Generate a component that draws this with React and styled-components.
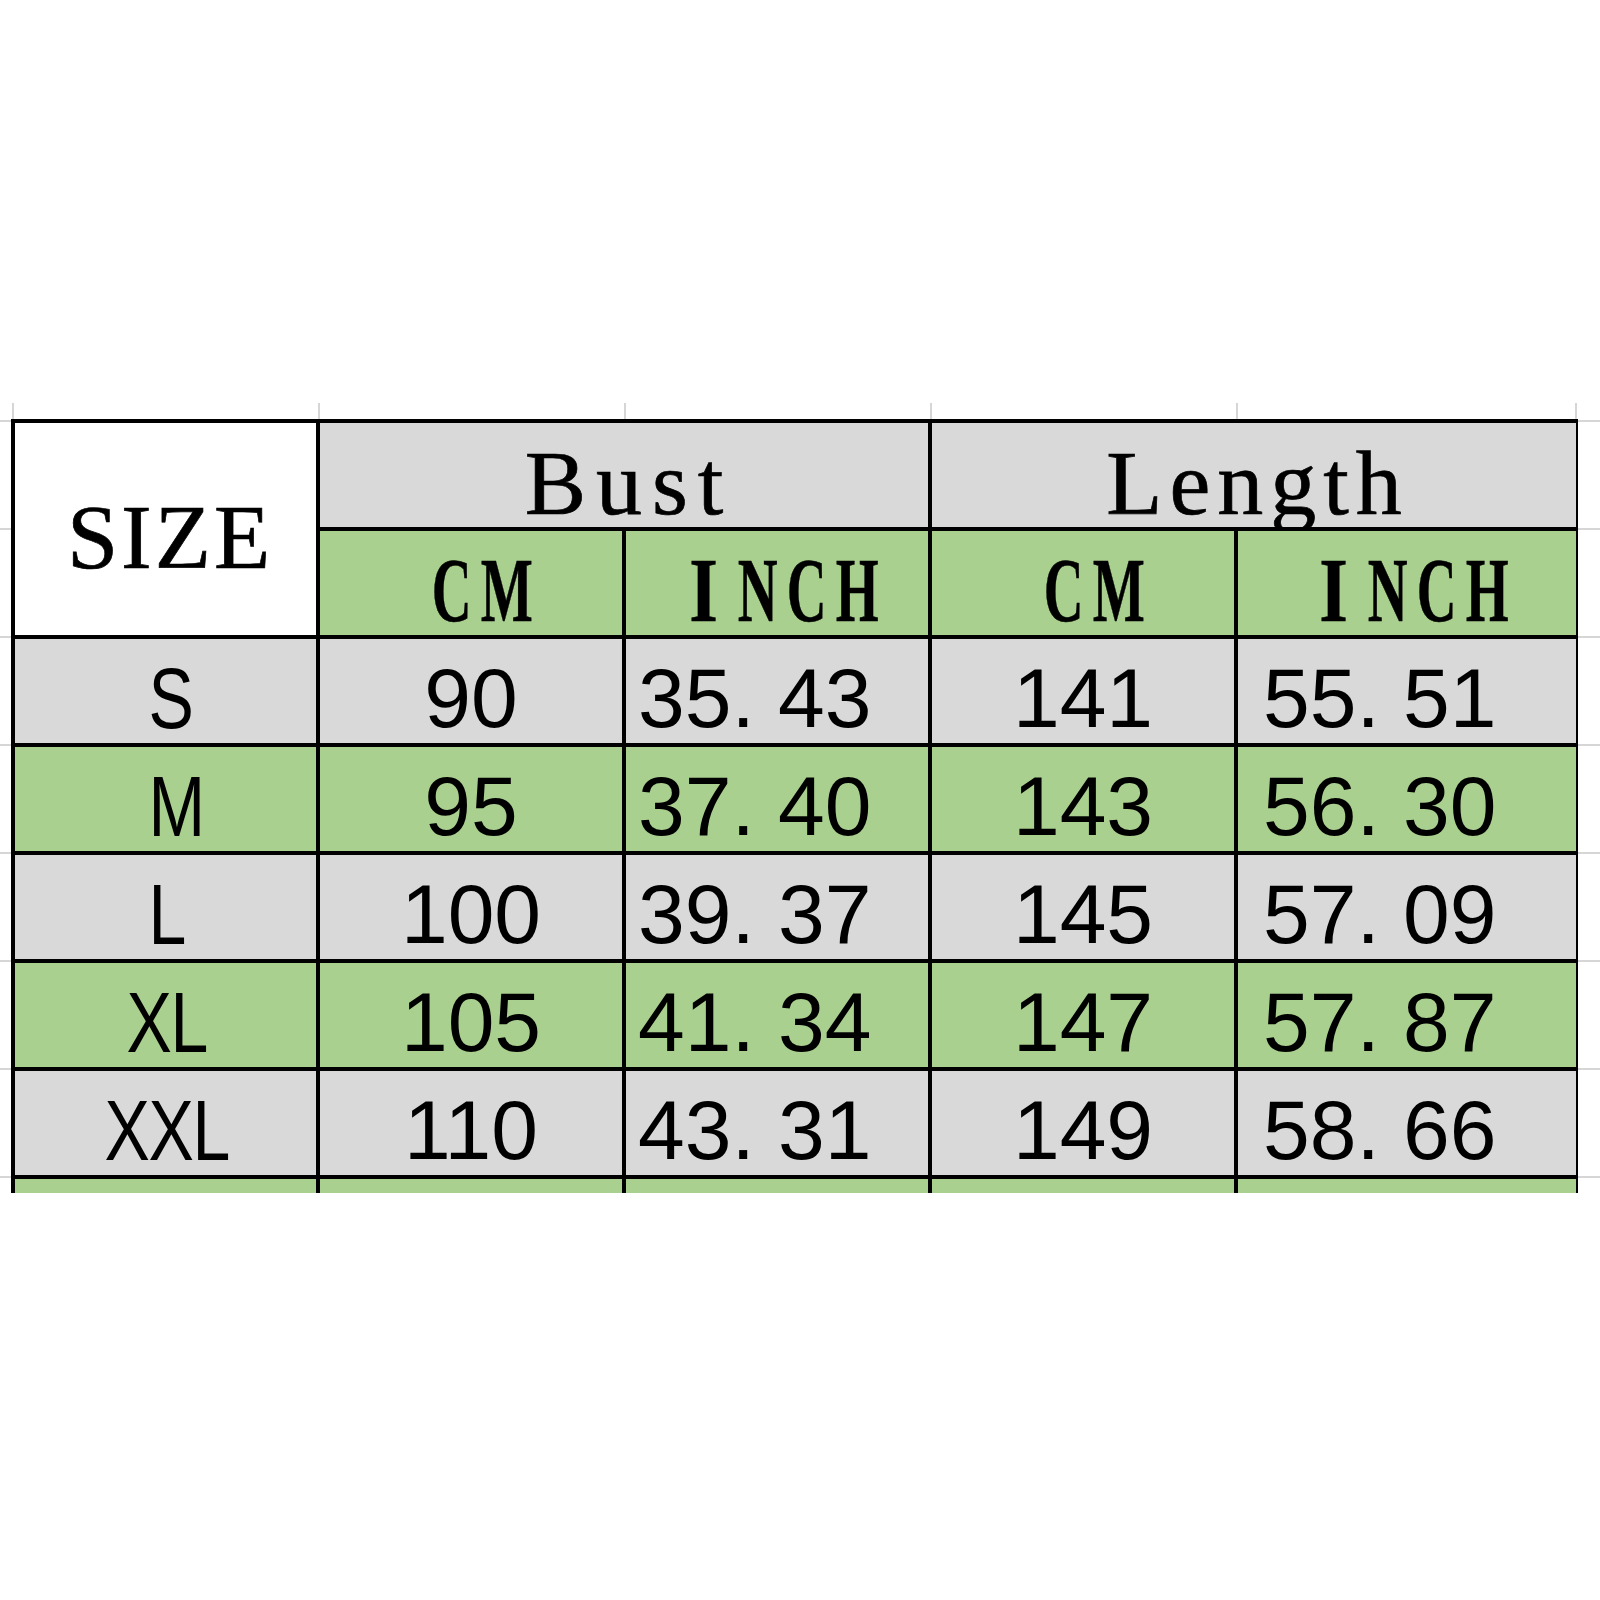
import React from 'react';
import styled, { createGlobalStyle } from 'styled-components';

const GREY = '#d9d9d9';
const GREEN = '#a9d08e';
const RULE = '#d6d6d6';

const GlobalStyle = createGlobalStyle`
  html, body {
    margin: 0;
    padding: 0;
    background: #fff;
  }
  body {
    font-family: 'Liberation Sans', Arial, sans-serif;
    color: #000;
  }
`;

const Page = styled.div`
  width: 1600px;
  height: 1600px;
  padding-top: 403px;
  box-sizing: border-box;
  overflow: hidden;
`;

const Sheet = styled.div`
  display: grid;
  grid-template-columns: 11px 1567px 22px;
  grid-template-rows: 16px auto;
  align-items: start;
`;

const TopRuler = styled.div`
  grid-column: 2;
  grid-row: 1;
  display: flex;
  height: 16px;
  padding-left: 1px;
`;

const TopTick = styled.span`
  flex: none;
  width: ${p => p.$w}px;
  border-left: 2px solid ${RULE};
  box-sizing: border-box;

  &:last-child {
    border-right: 2px solid ${RULE};
  }
`;

const SideRuler = styled.div`
  grid-column: ${p => p.$col};
  grid-row: 2;
  display: flex;
  flex-direction: column;
  padding-top: 1px;
`;

const SideTick = styled.span`
  flex: none;
  height: ${p => p.$h || 108}px;
  border-top: 2px solid ${RULE};
  box-sizing: border-box;
`;

const Table = styled.div`
  grid-column: 2;
  grid-row: 2;
  display: grid;
  grid-template-columns: 301px 302px 302px 302px 338px;
  grid-template-rows: repeat(7, 104px) 14px;
  gap: 4px;
  padding: 4px 4px 0;
  background: #000;
`;

const Cell = styled.div`
  background: ${p => p.$bg};
  display: flex;
  align-items: center;
  justify-content: ${p => (p.$left != null ? 'flex-start' : 'center')};
  padding-left: ${p => p.$left || 0}px;
  padding-top: ${p => p.$drop || 0}px;
  box-sizing: border-box;
  grid-column: ${p => (p.$span ? `span ${p.$span}` : 'auto')};
  grid-row: ${p => (p.$rows ? `span ${p.$rows}` : 'auto')};
`;

const Heading = styled.span`
  font-family: 'Liberation Serif', 'Times New Roman', serif;
  font-size: 92px;
  line-height: 1;
  white-space: pre;
  letter-spacing: ${p => p.$ls}px;
  margin-left: ${p => p.$shift || 0}px;
  margin-right: -${p => p.$ls}px;
  -webkit-text-stroke: 0.7px #000;
`;

const UnitWord = styled.div`
  display: flex;
  font-family: 'Liberation Serif', 'Times New Roman', serif;
  font-size: 92px;
  font-weight: 700;
  line-height: 1;
  -webkit-text-stroke: 0.5px #000;
`;

const SansWord = styled.div`
  display: flex;
  font-family: 'Liberation Sans', Arial, sans-serif;
  font-size: 85px;
  line-height: 1;
`;

const Number = styled.span`
  font-family: 'Liberation Sans', Arial, sans-serif;
  font-size: 84px;
  line-height: 1;
  white-space: pre;
`;

const Glyph = styled.span`
  display: block;
  flex: none;
  width: ${p => p.$w}px;
  text-align: center;
  transform: scaleX(${p => p.$sx});
`;

// the bold serif I is already narrow, so it is squeezed less than the rest
const narrow = { I: 0.8 };

const Spaced = ({ text, w, sx }) =>
  text.split('').map((c, i) => (
    <Glyph key={i} $w={w} $sx={narrow[c] && sx < 0.7 ? narrow[c] : sx}>
      {c}
    </Glyph>
  ));

const rows = [
  ['S', '90', '35. 43', '141', '55. 51'],
  ['M', '95', '37. 40', '143', '56. 30'],
  ['L', '100', '39. 37', '145', '57. 09'],
  ['XL', '105', '41. 34', '147', '57. 87'],
  ['XXL', '110', '43. 31', '149', '58. 66'],
];

const colTicks = [306, 306, 306, 306, 341];
const sideTicks = [108, 108, 108, 108, 108, 108, 108, 16];

export default function App() {
  return (
    <>
      <GlobalStyle />
      <Page>
        <Sheet>
          <TopRuler>
            {colTicks.map((w, i) => (
              <TopTick key={i} $w={w} />
            ))}
          </TopRuler>
          <SideRuler $col={1}>
            {sideTicks.map((h, i) => (
              <SideTick key={i} $h={h} />
            ))}
          </SideRuler>

          <Table>
            <Cell $bg="#fff" $rows={2} $drop={15}>
              <Heading $ls={3} $shift={6}>SIZE</Heading>
            </Cell>
            <Cell $bg={GREY} $span={2} $drop={16}>
              <Heading $ls={10}>Bust</Heading>
            </Cell>
            <Cell $bg={GREY} $span={2} $drop={16}>
              <Heading $ls={7}>Length</Heading>
            </Cell>
            {['CM', 'INCH', 'CM', 'INCH'].map((u, i) => (
              <Cell key={i} $bg={GREEN} $drop={14}>
                <UnitWord>
                  <Spaced text={u} w={49} sx={0.6} />
                </UnitWord>
              </Cell>
            ))}

            {rows.map((r, i) => {
              const bg = i % 2 === 0 ? GREY : GREEN;
              return (
                <React.Fragment key={r[0]}>
                  <Cell $bg={bg} $drop={14}>
                    <SansWord>
                      <Spaced text={r[0]} w={44} sx={0.8} />
                    </SansWord>
                  </Cell>
                  <Cell $bg={bg} $drop={14}>
                    <Number>{r[1]}</Number>
                  </Cell>
                  <Cell $bg={bg} $drop={14} $left={12}>
                    <Number>{r[2]}</Number>
                  </Cell>
                  <Cell $bg={bg} $drop={14}>
                    <Number>{r[3]}</Number>
                  </Cell>
                  <Cell $bg={bg} $drop={14} $left={25}>
                    <Number>{r[4]}</Number>
                  </Cell>
                </React.Fragment>
              );
            })}

            {[0, 1, 2, 3, 4].map(i => (
              <Cell key={`tail-${i}`} $bg={GREEN} />
            ))}
          </Table>

          <SideRuler $col={3}>
            {sideTicks.map((h, i) => (
              <SideTick key={i} $h={h} />
            ))}
          </SideRuler>
        </Sheet>
      </Page>
    </>
  );
}
